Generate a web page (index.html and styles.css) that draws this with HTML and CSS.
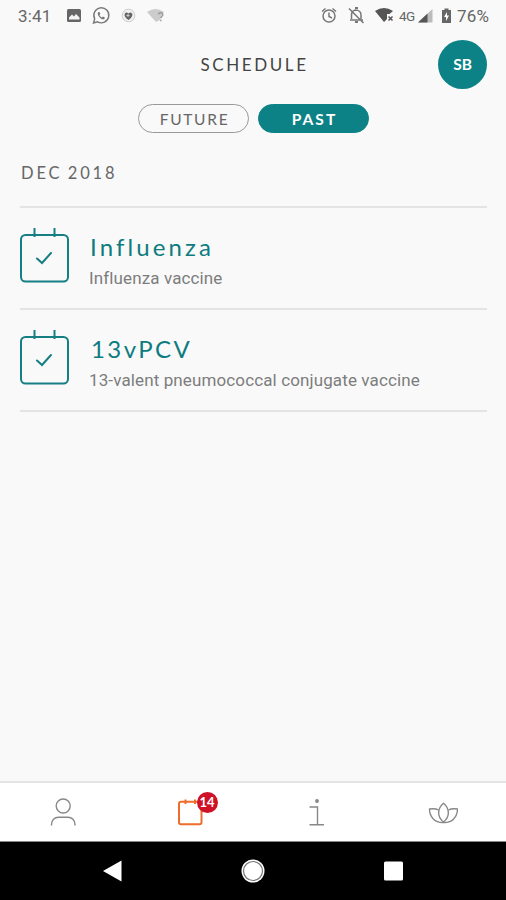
FILE: index.html
```html
<!DOCTYPE html>
<html lang="en">
<head>
<meta charset="utf-8">
<title>Schedule</title>
<link rel="stylesheet" href="styles.css">
</head>
<body>
<div class="app">
  <div class="status">
    <span class="clock">3:41</span>
    <svg class="status-left" width="100" height="20" viewBox="66 6 100 20">
      <rect x="67" y="9" width="14" height="13" rx="1.500" fill="#666"/>
      <path d="M69 19.500v-2l3-3 2 2 2-2.500 3.500 3.500v2z" fill="#f5f5f5"/>
      <path d="M93.500 23l1.200-4.200a7.500 7.500 0 1 1 2.900 3z" fill="none" stroke="#777" stroke-width="1.400"/>
      <path d="M98.500 12c-1.300 1-.9 2.900.8 4.900s3.900 3.100 5.200 1.800l.5-1-2-1.200-1.100 1c-1.200-.5-2.100-1.500-2.400-2.500l.8-1-.8-2z" fill="#777"/>
      <circle cx="128.500" cy="15.500" r="6.300" fill="#f1f1f1" stroke="#ccc"/>
      <path d="M128.500 20c-6-4-4-8-1.500-7.500l1.500 1 1.500-1c2.500-.5 4.500 3.500-1.500 7.500z" fill="#666"/>
      <path d="M128 14v3m-1.500-1.500h3" stroke="#ccc"/>
      <path d="M147 12q8.500-6 17 0l-3 4-1 4-4 2z" fill="#ccc"/>
      <path d="M158.500 14.500c0-2.500 4.500-2.200 4.300.2 0 1.500-2 1.600-2 3.600m0 1.500v1.500" fill="none" stroke="#999" stroke-width="1.400"/>
    </svg>
    <svg class="status-mid" width="74" height="20" viewBox="320 6 74 20" fill="none" stroke="#777" stroke-width="1.500">
      <circle cx="329" cy="16" r="6"/>
      <path d="M322 11.500l3.500-3m10.500 3l-3.500-3M329 12.500v4l3 1.500"/>
      <path d="M351.500 19v-4c0-2.500 1.500-4.500 4-5 3 0 5.500 2 5.500 5v4m-11 1h13M349 8.500l14.500 14.500"/>
      <path d="M355 8h3m-3 14h3" stroke-width="2"/>
      <path d="M375 11q9-6 18 0l-3.500 3H387v5l-3 3z" fill="#555" stroke="none"/>
      <path d="M388.500 16.500l4 4m0-4l-4 4" stroke="#555"/>
    </svg>
    <span class="network">4G</span>
    <svg class="status-right" width="36" height="20" viewBox="418 6 36 20">
      <path d="M418 22.500L432.500 9v13.500z" fill="#bbb"/>
      <path d="M418 22.500l9.500-9v9z" fill="#555"/>
      <path d="M442 10h2.500V8.500h4V10h2.500v13h-9z" fill="#666"/>
      <path d="M447 12l-3 5h2v4l3-5.500h-2z" fill="#fff"/>
    </svg>
    <span class="battery">76%</span>
  </div>

  <header class="header">
    <h1 class="title">SCHEDULE</h1>
    <div class="avatar">SB</div>
  </header>

  <div class="tabs">
    <div class="tab tab-future">FUTURE</div>
    <div class="tab tab-past">PAST</div>
  </div>

  <main class="list">
    <h2 class="month">DEC 2018</h2>
    <div class="row">
      <svg class="calendar" width="50" height="56" viewBox="0 0 50 56">
        <rect x="1" y="7" width="47" height="46.500" rx="4.500"/>
        <path d="M14.500 0v9m20-9v9"/>
        <path class="tick" d="M17 30.500l5 4.500 9-10"/>
      </svg>
      <div class="details">
        <div class="name">Influenza</div>
        <div class="description">Influenza vaccine</div>
      </div>
    </div>
    <div class="row">
      <svg class="calendar" width="50" height="56" viewBox="0 0 50 56">
        <rect x="1" y="7" width="47" height="46.500" rx="4.500"/>
        <path d="M14.500 0v9m20-9v9"/>
        <path class="tick" d="M17 30.500l5 4.500 9-10"/>
      </svg>
      <div class="details">
        <div class="name name-pcv">13vPCV</div>
        <div class="description">13-valent pneumococcal conjugate vaccine</div>
      </div>
    </div>
  </main>

  <nav class="nav">
    <div class="nav-item">
      <svg width="30" height="32" viewBox="0 0 30 32">
        <circle cx="15.200" cy="9" r="7"/>
        <path d="M3.500 28.500v-1c0-4 3-7.300 7-7.300h9.500c4 0 7 3.300 7 7.300v1"/>
      </svg>
    </div>
    <div class="nav-item nav-active">
      <svg width="30" height="32" viewBox="0 0 30 32">
        <rect x="4" y="4.700" width="22.500" height="22.500" rx="2"/>
        <path d="M10.500 2.500v4.500m9.500-4.500v4.500"/>
      </svg>
      <span class="badge">14</span>
    </div>
    <div class="nav-item">
      <svg width="30" height="32" viewBox="0 0 30 32">
        <path d="M8.500 10h8v17.500M8.500 27.700H23"/>
        <circle cx="16" cy="4" r="1.200" fill="#888"/>
      </svg>
    </div>
    <div class="nav-item">
      <svg width="30" height="32" viewBox="0 0 30 32">
        <path d="M15.500 6.300c-6.500 5.500-6.500 13.500 0 18.700 6.500-5.200 6.500-13.200 0-18.700z"/>
        <path d="M10.500 13c-2.500-1.500-5-1.500-9-1 0 8 5.500 14 14 13.500 8.500.5 14-5.500 14-13.500-4-.5-6.500-.5-9 1"/>
      </svg>
    </div>
  </nav>

  <div class="system-bar">
    <svg width="20" height="24" viewBox="0 0 20 24"><path d="M1 12L19.500 1.500v21z" fill="#fff"/></svg>
    <svg width="26" height="26" viewBox="0 0 26 26"><circle cx="13" cy="13" r="11.500" fill="#fff"/><circle cx="13" cy="13" r="9.500" fill="none" stroke="#777" stroke-width="1.200"/></svg>
    <svg width="20" height="20" viewBox="0 0 20 20"><rect x="0" y=".5" width="19" height="19" rx="1.500" fill="#fff"/></svg>
  </div>
</div>
</body>
</html>
```
FILE: styles.css
```css
* { box-sizing: border-box; }
body { margin: 0; background: #f9f9f9; font-family: Lato, sans-serif; }
.app { display: flex; flex-direction: column; width: 506px; height: 900px; }

.status { display: flex; align-items: center; height: 32px; padding-left: 18px; font: 17px Roboto, sans-serif; color: #666; }
.clock { width: 48px; letter-spacing: .2px; }
.status-mid { margin-left: 154px; }
.network { width: 19px; margin-left: 5px; font-size: 13.500px; letter-spacing: -.5px; }
.battery { margin-left: 3px; letter-spacing: .2px; }

.header { display: grid; grid-template-columns: 1fr auto 1fr; align-items: center; height: 64px; padding: 0 19px 0 20px; }
.title { grid-column: 2; margin: 0; padding-left: 2px; font-size: 17px; font-weight: 400; letter-spacing: 2.600px; color: #444; }
.avatar { display: flex; justify-content: center; align-items: center; justify-self: end; width: 49px; height: 49px; border-radius: 50%; background: #0d8286; color: #fff; font-size: 15.500px; font-weight: 700; letter-spacing: -.2px; }

.tabs { display: flex; justify-content: center; gap: 9px; height: 44px; padding-top: 8px; }
.tab { display: flex; justify-content: center; align-items: center; width: 111px; height: 29px; padding-left: 3px; border: 1px solid #999; border-radius: 15px; font-size: 15.500px; letter-spacing: 1.700px; color: #666; }
.tab-past { border-color: #0d8286; background: #0d8286; color: #fff; font-weight: 700; letter-spacing: 2px; }

.list { flex: 1; padding: 0 19px 0 20px; }
.month { display: flex; align-items: center; height: 68px; margin: 0; padding-left: 1px; border-bottom: 2px solid #e4e4e4; font-size: 16.500px; font-weight: 400; letter-spacing: 2.900px; word-spacing: -2px; color: #666; }
.row { display: flex; gap: 20px; height: 102px; padding-top: 20px; border-bottom: 2px solid #e4e4e4; }
.calendar { flex: none; fill: none; stroke: #167f83; stroke-width: 2; }
.tick { stroke-linecap: round; }
.details { margin-left: -1px; }
.name { height: 38px; padding-left: 1px; font-size: 24px; line-height: 38px; letter-spacing: 3.100px; color: #0d7c80; }
.name-pcv { padding-left: 2px; letter-spacing: 2.400px; }
.description { font: 17px/24px Roboto, sans-serif; letter-spacing: .12px; color: #7d7d7d; white-space: nowrap; }

.nav { display: grid; grid-template-columns: repeat(4, 1fr); height: 61px; border-top: 2px solid #e4e4e4; border-bottom: 1px solid #888; background: #fff; }
.nav-item { position: relative; display: flex; justify-content: center; align-items: center; padding-top: 2px; }
.nav-item svg { fill: none; stroke: #888; stroke-width: 1.400; }
.nav-active svg { stroke: #ef6c2f; stroke-width: 2; }
.badge { position: absolute; top: 9px; left: 70px; width: 21px; height: 21px; border-radius: 50%; background: #cf1027; color: #fff; font: 700 13px/21px Lato, sans-serif; text-align: center; }

.system-bar { display: flex; align-items: center; height: 58px; padding-left: 102px; gap: 118px; background: #000; }
```
